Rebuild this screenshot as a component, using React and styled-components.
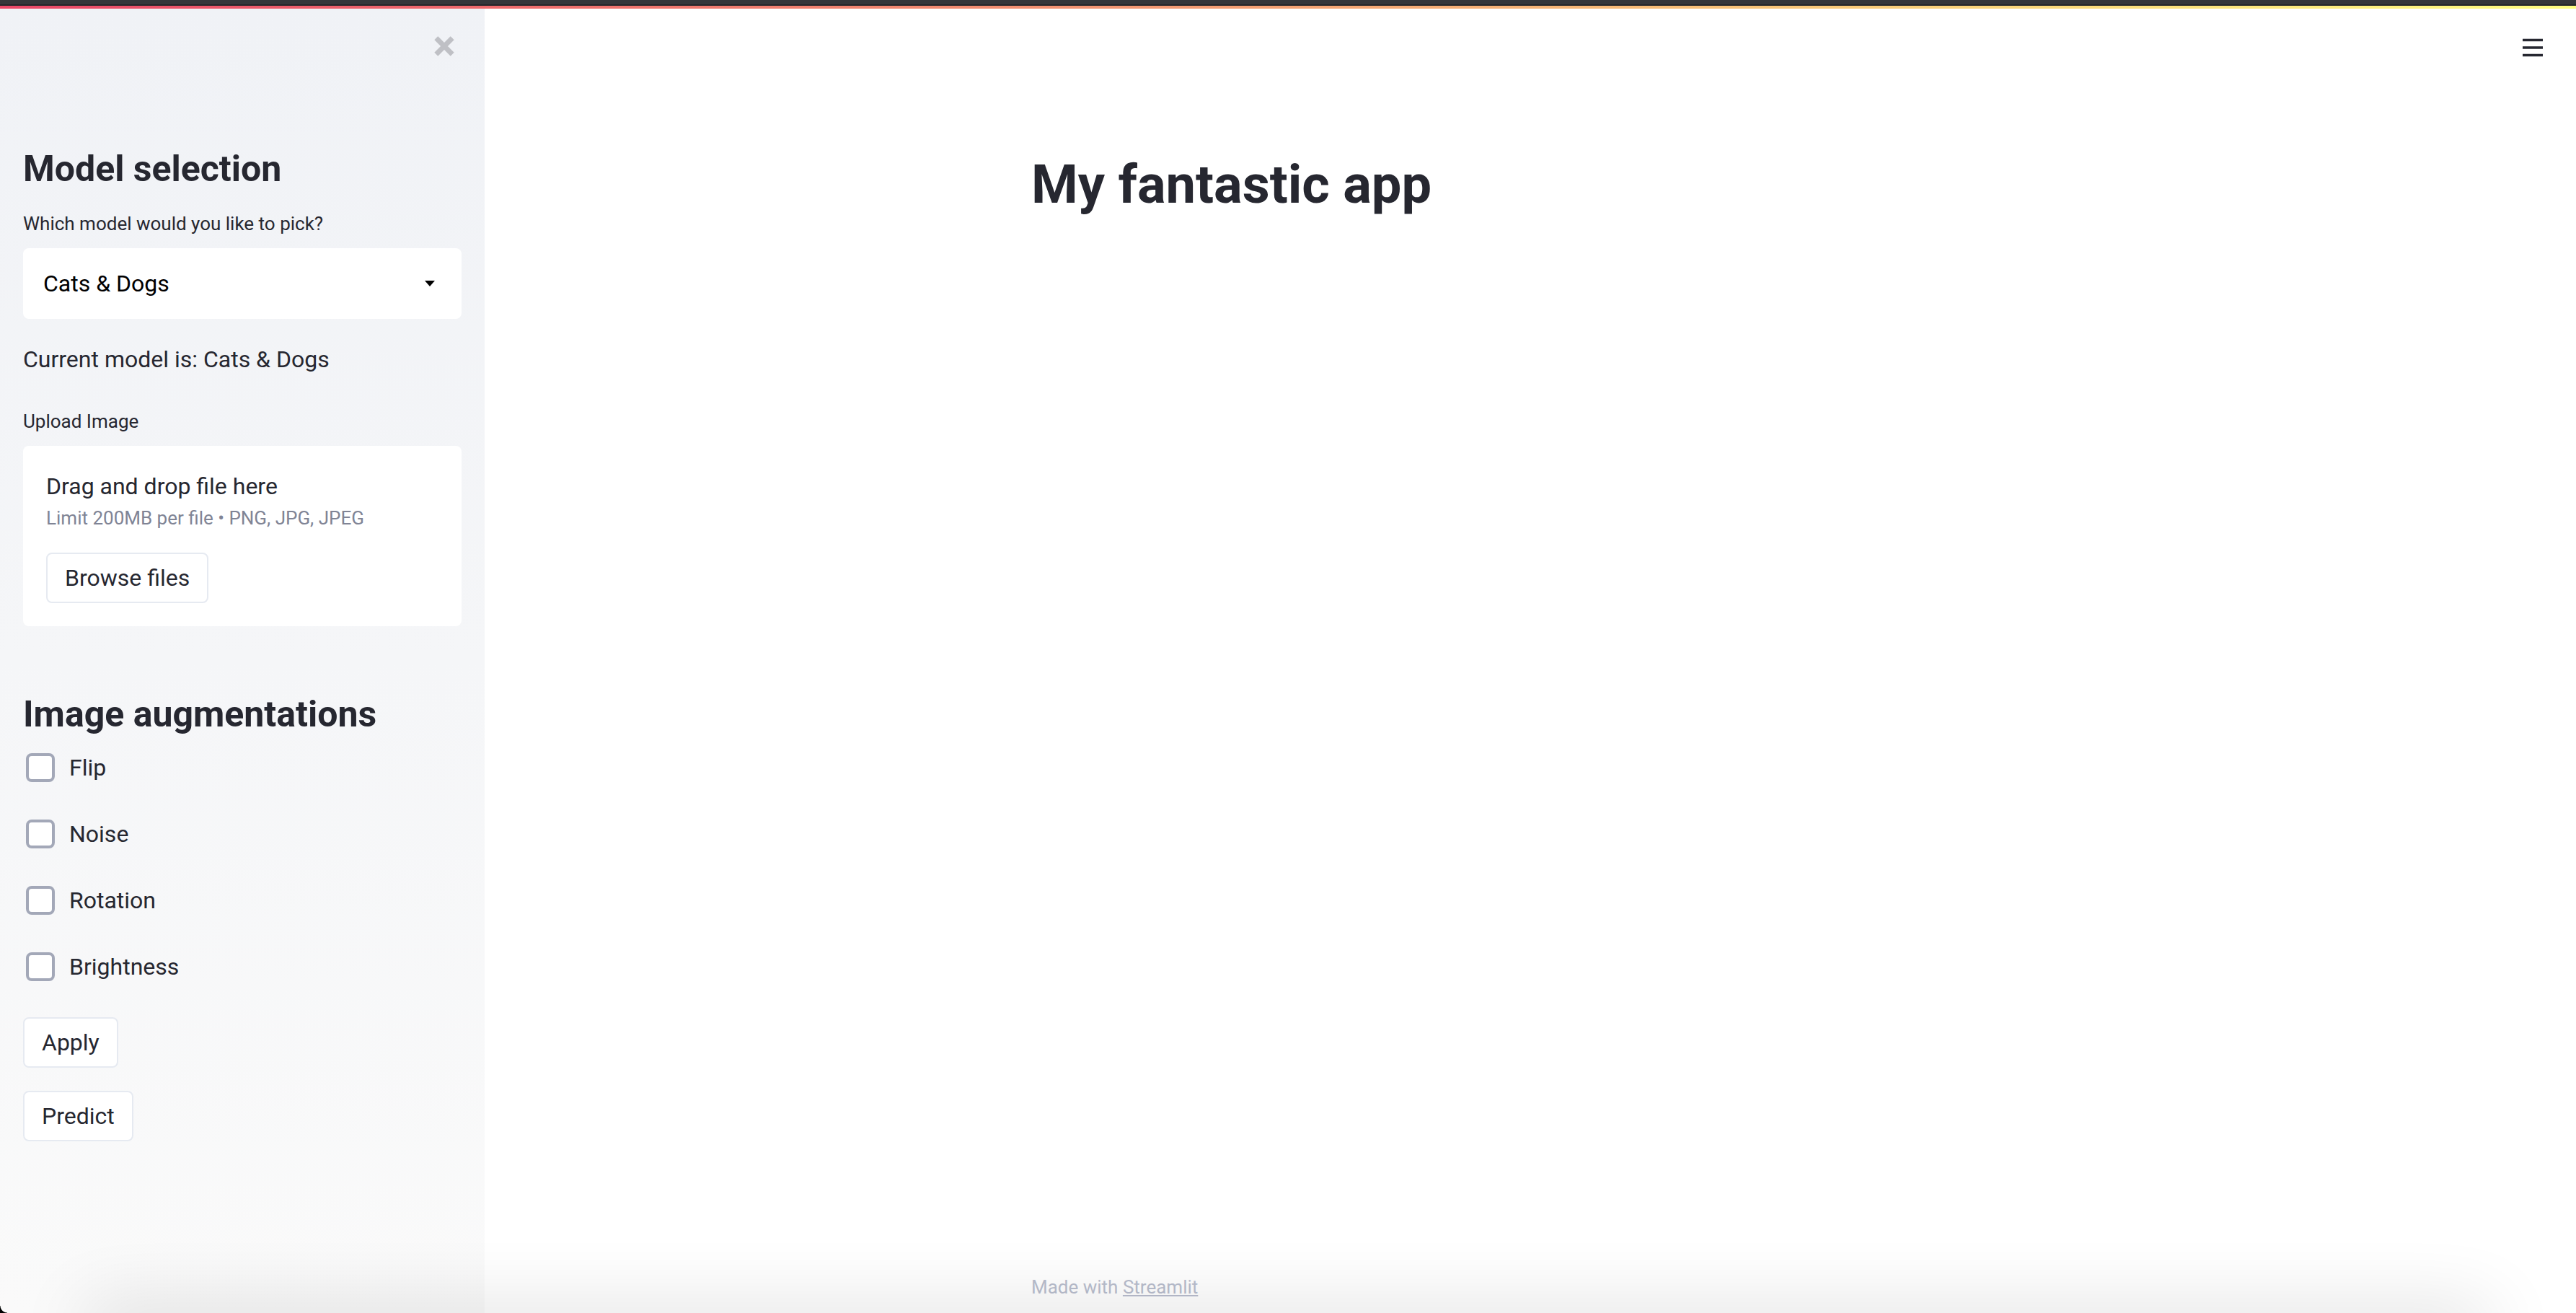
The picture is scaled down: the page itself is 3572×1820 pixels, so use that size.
import React, { useState } from "react";
import styled, { createGlobalStyle } from "styled-components";

const GlobalStyle = createGlobalStyle`
  *, *::before, *::after { box-sizing: border-box; }
  body {
    margin: 0;
    background: #ffffff;
    color: #262730;
    font-family: Roboto, "Noto Sans", sans-serif;
    font-size: 32px;
    line-height: 48px;
  }
  h1, h2, p { margin: 0; }
  button, select { font: inherit; color: inherit; }
`;

const Page = styled.div`
  position: relative;
  display: flex;
  flex-direction: column;
  min-height: 100vh;
  overflow: hidden;
`;

const WindowEdge = styled.div`
  height: 8px;
  background: #35363a;
  border-bottom: 2px solid #25262a;
`;

const Decoration = styled.div`
  height: 4px;
  background: linear-gradient(90deg, #ea4868, #fffd80);
`;

const Body = styled.div`
  flex: 1;
  display: flex;
`;

const Sidebar = styled.aside`
  width: 672px;
  flex-shrink: 0;
  padding: 32px;
  background: linear-gradient(180deg, #f0f2f6, #fafafa);
`;

const SidebarTop = styled.div`
  display: flex;
  justify-content: flex-end;
  padding-right: 4px;
  margin-bottom: 122px;
`;

const IconButton = styled.button`
  display: flex;
  align-items: center;
  justify-content: center;
  width: 40px;
  height: 40px;
  padding: 0;
  border: 0;
  background: none;
`;

const SectionTitle = styled.h2`
  margin-top: ${(p) => p.$space || 0}px;
  font-size: 50px;
  line-height: 56px;
  font-weight: 700;
`;

const FieldLabel = styled.label`
  display: block;
  font-size: 26px;
  line-height: 40px;
`;

const Field = styled.div`
  display: flex;
  flex-direction: column;
  gap: 14px;
  margin-top: ${(p) => p.$space}px;
`;

const SelectBox = styled.div`
  display: grid;
  align-items: center;
  background: #ffffff;
  border-radius: 8px;
  & > * { grid-area: 1 / 1; }
  & > svg { justify-self: end; margin-right: 36px; pointer-events: none; }
`;

const Select = styled.select`
  appearance: none;
  width: 100%;
  height: 98px;
  padding: 0 28px;
  border: 0;
  border-radius: 8px;
  background: transparent;
  color: #000000;
`;

const Status = styled.p`
  margin-top: 32px;
`;

const DropZone = styled.section`
  padding: 32px;
  background: #ffffff;
  border-radius: 8px;
`;

const Limit = styled.p`
  margin-bottom: 28px;
  font-size: 26px;
  line-height: 40px;
  color: #808495;
`;

const Button = styled.button`
  display: block;
  height: 70px;
  padding: 0 24px;
  border: 2px solid #e6eaf1;
  border-radius: 8px;
  background: #ffffff;
`;

const Options = styled.div`
  display: flex;
  flex-direction: column;
  gap: 44px;
  margin: 22px 0 46px;
`;

const Option = styled.label`
  display: flex;
  align-items: center;
  gap: 20px;
  height: 48px;
  padding-left: 4px;
`;

const Checkbox = styled.input`
  appearance: none;
  width: 40px;
  height: 40px;
  margin: 0;
  border: 4px solid #a3a8b8;
  border-radius: 8px;
  background: #ffffff;
  &:checked { background: #a3a8b8; }
`;

const Actions = styled.div`
  display: flex;
  flex-direction: column;
  align-items: flex-start;
  gap: 32px;
`;

const Main = styled.main`
  flex: 1;
  display: flex;
  flex-direction: column;
`;

const Toolbar = styled.header`
  display: flex;
  justify-content: flex-end;
  padding: 34px 40px;
`;

const Column = styled.div`
  width: 100%;
  max-width: 1384px;
  margin: 0 auto;
`;

const Title = styled.h1`
  margin-top: 92px;
  font-size: 74px;
  line-height: 88px;
  font-weight: 700;
`;

const Footer = styled.footer`
  width: 100%;
  max-width: 1384px;
  margin: auto auto 0;
  padding-bottom: 16px;
  font-size: 26px;
  line-height: 40px;
  color: #b9bece;
`;

const FooterLink = styled.a`
  color: inherit;
  text-decoration: underline;
`;

const DockShadow = styled.div`
  position: absolute;
  left: 120px;
  right: 120px;
  bottom: -40px;
  height: 40px;
  box-shadow: 0 0 100px rgba(0, 0, 0, 0.2);
  pointer-events: none;
`;

const Corner = styled.div`
  position: absolute;
  left: 0;
  bottom: 0;
  width: 10px;
  height: 10px;
  background: radial-gradient(circle at 100% 0, transparent 9px, #000000 10px);
  pointer-events: none;
`;

const augmentations = ["Flip", "Noise", "Rotation", "Brightness"];

export default function App() {
  const [model, setModel] = useState("Cats & Dogs");
  return (
    <Page>
      <GlobalStyle />
      <WindowEdge />
      <Decoration />
      <Body>
        <Sidebar>
          <SidebarTop>
            <IconButton aria-label="Close sidebar">
              <svg width="28" height="28" viewBox="0 0 28 28">
                <path d="M2.8 2.8L25.2 25.2M25.2 2.8L2.8 25.2" stroke="#bfc0c5" strokeWidth="7" />
              </svg>
            </IconButton>
          </SidebarTop>
          <SectionTitle>Model selection</SectionTitle>
          <Field $space={28}>
            <FieldLabel htmlFor="model">Which model would you like to pick?</FieldLabel>
            <SelectBox>
              <Select id="model" value={model} onChange={(e) => setModel(e.target.value)}>
                <option>Cats &amp; Dogs</option>
              </Select>
              <svg width="16" height="8" viewBox="0 0 16 8">
                <path d="M1 0H15L8 8Z" fill="#000000" />
              </svg>
            </SelectBox>
          </Field>
          <Status>Current model is: {model}</Status>
          <Field $space={42}>
            <FieldLabel htmlFor="browse">Upload Image</FieldLabel>
            <DropZone>
              <p>Drag and drop file here</p>
              <Limit>Limit 200MB per file • PNG, JPG, JPEG</Limit>
              <Button id="browse">Browse files</Button>
            </DropZone>
          </Field>
          <SectionTitle $space={94}>Image augmentations</SectionTitle>
          <Options>
            {augmentations.map((name) => (
              <Option key={name}>
                <Checkbox type="checkbox" />
                {name}
              </Option>
            ))}
          </Options>
          <Actions>
            <Button>Apply</Button>
            <Button>Predict</Button>
          </Actions>
        </Sidebar>
        <Main>
          <Toolbar>
            <IconButton aria-label="Menu">
              <svg width="28" height="26" viewBox="0 0 28 26">
                <path d="M0 2.5H28M0 13H28M0 23.5H28" stroke="#262730" strokeWidth="3.5" />
              </svg>
            </IconButton>
          </Toolbar>
          <Column>
            <Title>My fantastic app</Title>
          </Column>
          <Footer>
            Made with <FooterLink href="#streamlit">Streamlit</FooterLink>
          </Footer>
        </Main>
      </Body>
      <DockShadow />
      <Corner />
    </Page>
  );
}
